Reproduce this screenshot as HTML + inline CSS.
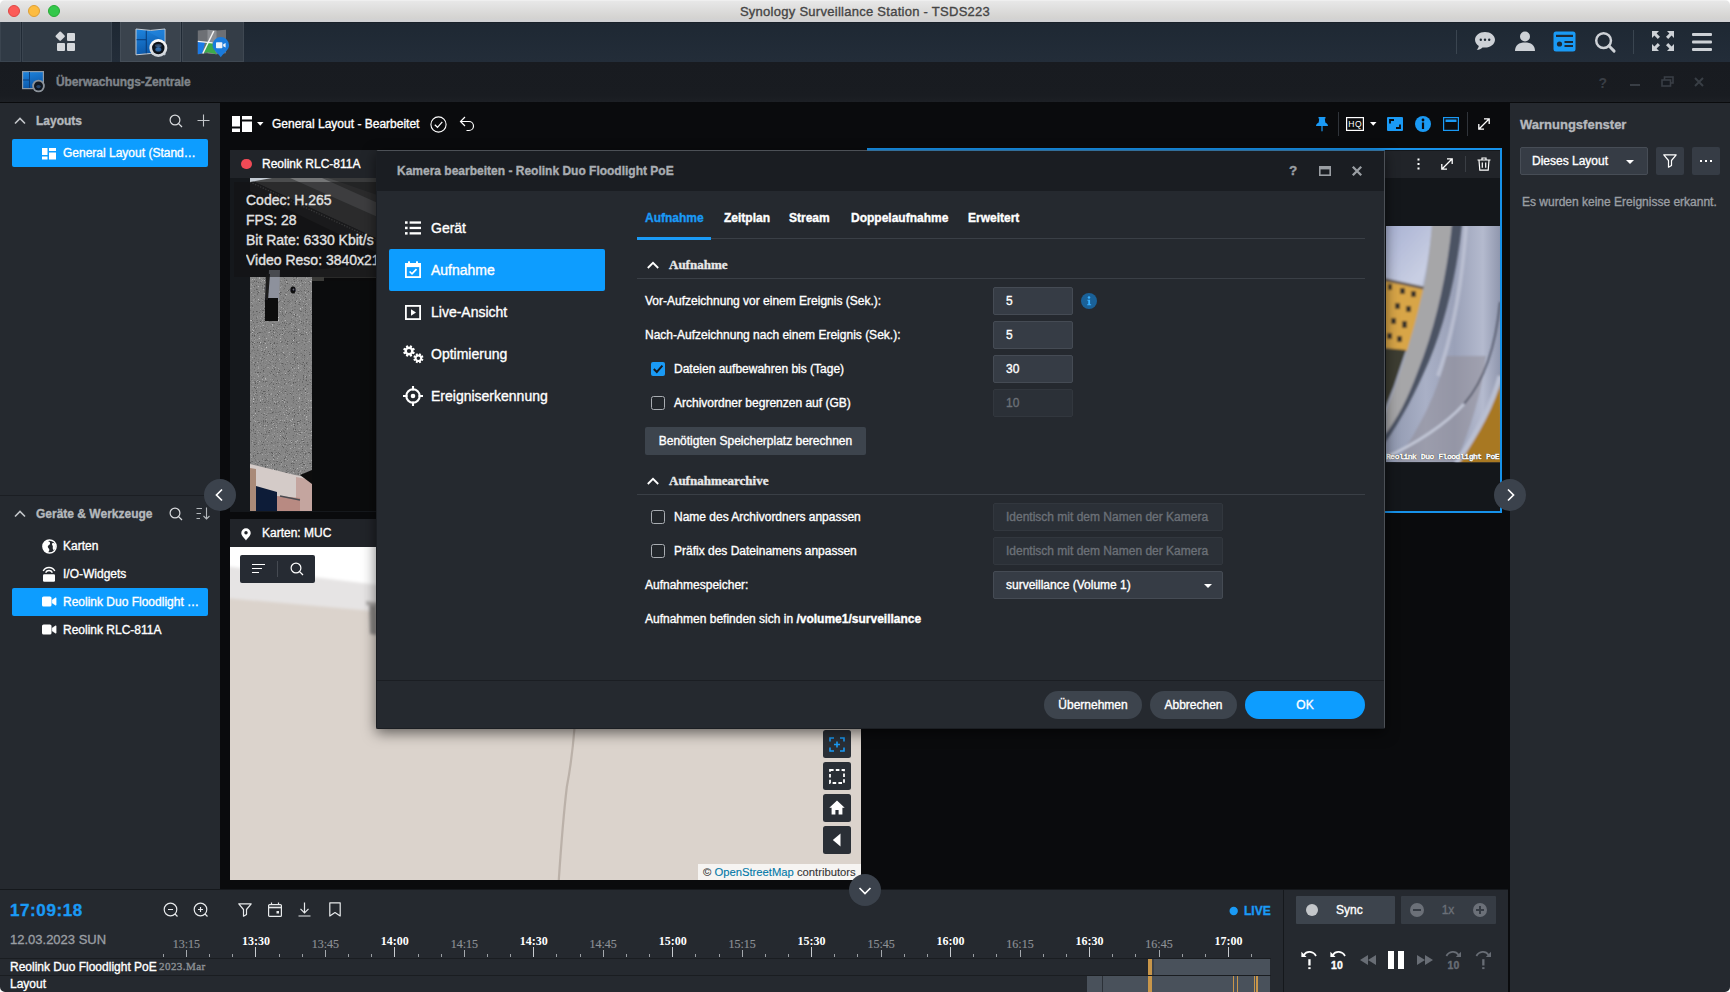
<!DOCTYPE html>
<html lang="de">
<head>
<meta charset="utf-8">
<title>Synology Surveillance Station - TSDS223</title>
<style>
*{box-sizing:border-box;margin:0;padding:0}
html,body{width:1730px;height:992px;overflow:hidden;background:#0a0b0d}
body{font-family:"Liberation Sans",sans-serif;font-size:13px;color:#fff;position:relative;-webkit-font-smoothing:antialiased;-webkit-text-stroke:0.350px}
.abs{position:absolute}
.t{position:absolute;white-space:nowrap;line-height:16px}
svg{position:absolute;overflow:visible}
.serif{font-family:"Liberation Serif",serif}
/* regions */
#titlebar{left:0;top:0;width:1730px;height:22px;background:linear-gradient(#f3f3f3 0,#e7e7e7 1.500px,#d4d3d1 18px,#cfd1d5 22px)}
#taskbar{left:0;top:22px;width:1730px;height:40px;background:linear-gradient(#1e2833,#232d39);border-top:1px solid #19212a}
#apphdr{left:0;top:62px;width:1730px;height:40px;background:linear-gradient(#181b20 0,#191c21 85%,#1d2025 100%)}
#left{left:0;top:103px;width:220px;height:786px;background:#25292f}
#main{left:220px;top:102px;width:1290px;height:787px;background:#0a0b0d}
#right{left:1510px;top:103px;width:220px;height:889px;background:#25292f}
#timeline{left:0;top:888.500px;width:1283px;height:104px;background:#25292f;border-top:1px solid #15181c}
#controls{left:1283px;top:888.500px;width:225px;height:104px;background:#25292f;border-top:1px solid #15181c;border-left:1px solid #15181c}
</style>
</head>
<body>
<div id="titlebar" class="abs"></div>
<div id="taskbar" class="abs"></div>
<div id="apphdr" class="abs"></div>
<div id="left" class="abs"></div>
<div id="main" class="abs"></div>
<div id="right" class="abs"></div>
<div id="timeline" class="abs"></div>
<div id="controls" class="abs"></div>
<div class="abs" style="left:8px;top:5px;width:12px;height:12px;border-radius:50%;background:#fc5b57;border:0.5px solid #df4744"></div>
<div class="abs" style="left:28px;top:5px;width:12px;height:12px;border-radius:50%;background:#fdbc40;border:0.5px solid #de9f34"></div>
<div class="abs" style="left:48px;top:5px;width:12px;height:12px;border-radius:50%;background:#34c84a;border:0.5px solid #27aa35"></div>
<div class="t" style="left:0;top:4px;width:1730px;text-align:center;font-size:13px;color:#454545;letter-spacing:0.270px">Synology Surveillance Station - TSDS223</div>

<div class="abs" style="left:0;top:22px;width:21px;height:40px;background:#303a45;border:1px solid #3a444f;border-top:none"></div>
<div class="abs" style="left:22px;top:22px;width:90px;height:40px;background:#303a45;border:1px solid #3a444f;border-top:none"></div>
<div class="abs" style="left:120px;top:22px;width:61px;height:40px;background:#3a434d;border:1px solid #454e58;border-top:none"></div>
<div class="abs" style="left:182px;top:22px;width:62px;height:40px;background:#343d47;border:1px solid #3f4852;border-top:none"></div>
<svg style="left:55px;top:31px" width="22" height="22" viewBox="0 0 22 22"><g fill="#d5d8dc"><rect x="1.6" y="1.6" width="7.2" height="7.2" rx="1" transform="rotate(45 5.2 5.2)"/><rect x="12" y="2" width="8" height="8" rx="1"/><rect x="2" y="12" width="8" height="8" rx="1"/><rect x="12" y="12" width="8" height="8" rx="1"/></g></svg>
<!-- surveillance icon -->
<svg style="left:134px;top:28px" width="36" height="30" viewBox="0 0 36 30"><defs><linearGradient id="gb" x1="0" y1="0" x2="0.300" y2="1"><stop offset="0" stop-color="#1f86e0"/><stop offset="1" stop-color="#0b57a8"/></linearGradient><radialGradient id="gl" cx="0.500" cy="0.500" r="0.500"><stop offset="0" stop-color="#2a5f98"/><stop offset="0.500" stop-color="#0e1a28"/><stop offset="1" stop-color="#0a0d12"/></radialGradient><linearGradient id="gr" x1="0" y1="0" x2="0" y2="1"><stop offset="0" stop-color="#ffffff"/><stop offset="1" stop-color="#c9ced4"/></linearGradient></defs><path d="M2 1 Q16.500 3.800 31 1 V26.800 Q16.500 24.200 2 26.800Z" fill="url(#gb)" stroke="#c3ccd6" stroke-width="1"/><path d="M12.300 2.800 V25.200" stroke="#0a3f7d" stroke-width="1.100"/><path d="M2.600 11.700 H12.300" stroke="#0a3f7d" stroke-width="1.100"/><path d="M12.800 3 L31 13 V2 Q20 3.800 12.800 3Z" fill="#2f93ea" opacity=".350"/><circle cx="24.300" cy="20" r="9" fill="url(#gr)"/><circle cx="24.300" cy="20" r="6.200" fill="url(#gl)"/><ellipse cx="24.300" cy="21.500" rx="3" ry="2" fill="#3a7fc8" opacity=".700"/><ellipse cx="24.300" cy="17.500" rx="3.400" ry="1.600" fill="#5a86b8" opacity=".450"/></svg>
<!-- map icon -->
<svg style="left:197px;top:29px" width="36" height="30" viewBox="0 0 36 30"><path d="M0.800 1.500 L10.500 0.800 L19.500 1.500 L29 0.800 V24.300 L19.500 25.300 L10.500 24.300 L0.800 25.300Z" fill="#6d7075"/><path d="M10.500 0.800 L19.500 1.500 V25.300 L10.500 24.300Z" fill="#8b8e93"/><path d="M0.800 12.500 L8 13.300 L5.500 24.300 L0.800 25.300Z" fill="#1b7ae6"/><path d="M9.500 13.500 L15.500 14.200 L19.500 25.300 L10.500 23.300 L6.800 24Z" fill="#3daa4b"/><path d="M16.800 2 L5.800 24.500" stroke="#f4f4f4" stroke-width="1.500"/><path d="M0.800 12.300 L15.500 13.800" stroke="#f4f4f4" stroke-width="1.300"/><path d="M23.800 8 a8.300 8.300 0 0 1 8.300 8.300 c0 4.500 -5 7.500 -8.300 11.900 c-3.300 -4.400 -8.300 -7.400 -8.300 -11.900 a8.300 8.300 0 0 1 8.300 -8.300z" fill="#1a7bdc"/><rect x="19" y="13.300" width="6.400" height="6" rx="0.800" fill="#eef3fa"/><path d="M26.200 15.300 L28.600 14 V18.600 L26.200 17.300Z" fill="#eef3fa"/></svg>
<!-- right icons -->
<div class="abs" style="left:1456px;top:30px;width:1px;height:24px;background:#3a4550"></div>
<div class="abs" style="left:1633px;top:30px;width:1px;height:24px;background:#3a4550"></div>
<svg style="left:1474px;top:30px" width="22" height="22" viewBox="0 0 22 22"><path d="M11 2 C5.500 2 1 5.400 1 9.800 c0 2.500 1.500 4.700 3.800 6.100 c-.2 1.500 -1 2.800 -2.100 3.800 c2.400 0 4.400 -.9 5.800 -2.300 c.8 .2 1.600 .2 2.500 .2 c5.500 0 10 -3.400 10 -7.800 S16.500 2 11 2z" fill="#cdd1d6"/><circle cx="6.800" cy="9.800" r="1.200" fill="#1d2833"/><circle cx="11" cy="9.800" r="1.200" fill="#1d2833"/><circle cx="15.200" cy="9.800" r="1.200" fill="#1d2833"/></svg>
<svg style="left:1514px;top:30px" width="22" height="22" viewBox="0 0 22 22"><circle cx="11" cy="6.500" r="5" fill="#cdd1d6"/><path d="M1 21 c0 -6 4 -8.500 10 -8.500 s10 2.500 10 8.500z" fill="#cdd1d6"/></svg>
<svg style="left:1553px;top:30.600px" width="24" height="22" viewBox="0 0 24 22"><rect x="0.500" y="0.500" width="22" height="20" rx="2.500" fill="#1a9af5"/><rect x="3" y="3.800" width="17" height="2.200" fill="#1d2833"/><circle cx="6.500" cy="13" r="2.600" fill="#1d2833"/><rect x="11.500" y="10" width="8.500" height="2" fill="#1d2833"/><rect x="11.500" y="14" width="8.500" height="2" fill="#1d2833"/></svg>
<svg style="left:1594px;top:30.500px" width="23" height="23" viewBox="0 0 24 24"><circle cx="10" cy="10" r="7.700" fill="none" stroke="#cdd1d6" stroke-width="2.600"/><path d="M15.500 15.500 L21 21" stroke="#cdd1d6" stroke-width="3" stroke-linecap="round"/></svg>
<svg style="left:1651px;top:30px" width="24" height="22" viewBox="0 0 24 22"><g fill="#cdd1d6"><path d="M1 1 h7 l-2.400 2.400 l3.400 3.400 l-2.200 2.200 l-3.400 -3.400 L1 8z"/><path d="M23 1 v7 l-2.400 -2.400 l-3.400 3.400 l-2.200 -2.200 l3.400 -3.400 L16 1z"/><path d="M1 21 v-7 l2.400 2.400 l3.400 -3.400 l2.200 2.200 l-3.400 3.400 L8 21z"/><path d="M23 21 h-7 l2.400 -2.400 l-3.400 -3.400 l2.200 -2.200 l3.400 3.400 L23 14z"/></g></svg>
<svg style="left:1692px;top:32.700px" width="20" height="18" viewBox="0 0 20 18"><g fill="#cdd1d6"><rect x="0" y="0" width="20" height="3" rx="1"/><rect x="0" y="7.500" width="20" height="3" rx="1"/><rect x="0" y="15" width="20" height="3" rx="1"/></g></svg>

<svg style="left:22px;top:71px" width="24" height="22" viewBox="0 0 24 22"><rect x="0.600" y="0.600" width="20.800" height="17" fill="url(#gb)" stroke="#8f9aa6" stroke-width="1.200"/><path d="M7.500 1 V17 M1 9 H7.500" stroke="#0c3f7a" stroke-width="1"/><circle cx="16.500" cy="15" r="6.300" fill="#8c939b"/><circle cx="16.500" cy="15" r="4.500" fill="#10161e"/><ellipse cx="16.500" cy="15.600" rx="2.200" ry="1.700" fill="#2a4f7a" opacity=".8"/></svg>
<div class="t" style="left:56px;top:74px;font-size:12px;font-weight:bold;color:#7f848a;letter-spacing:-0.1px">Überwachungs-Zentrale</div>
<div class="t" style="left:1598.500px;top:75px;font-size:14px;font-weight:bold;color:#393e45;-webkit-text-stroke:0">?</div>
<div class="abs" style="left:1630px;top:84px;width:10px;height:2px;background:#393e45"></div>
<svg style="left:1661px;top:76px" width="13" height="11" viewBox="0 0 13 11"><rect x="3.500" y="1" width="8.500" height="6" fill="none" stroke="#393e45" stroke-width="1.600"/><rect x="1" y="4" width="8.500" height="6" fill="#171b21" stroke="#393e45" stroke-width="1.600"/></svg>
<svg style="left:1694px;top:77px" width="10" height="10" viewBox="0 0 10 10"><path d="M1 1 L9 9 M9 1 L1 9" stroke="#393e45" stroke-width="2"/></svg>

<svg style="left:14px;top:117px" width="12" height="8" viewBox="0 0 12 8"><path d="M1 6.500 L6 1.500 L11 6.500" fill="none" stroke="#c3c6ca" stroke-width="1.600"/></svg><div class="t" style="left:36px;top:113px;font-size:12px;font-weight:bold;color:#b4b8bc">Layouts</div>
<svg style="left:169px;top:114px" width="14" height="14" viewBox="0 0 14 14"><circle cx="6" cy="6" r="4.900" fill="none" stroke="#d9dbde" stroke-width="1.200"/><path d="M9.600 9.600 L13 13" stroke="#d9dbde" stroke-width="1.300"/></svg><svg style="left:197px;top:114px" width="13" height="13" viewBox="0 0 13 13"><path d="M6.500 0.500 V12.500 M0.500 6.500 H12.500" stroke="#c3c6ca" stroke-width="1.100"/></svg>
<div class="abs" style="left:12px;top:139px;width:196px;height:28px;background:#0d9dff;border-radius:2px"></div>
<svg style="left:42px;top:147.500px" width="14" height="12" viewBox="0 0 14 12"><g fill="#fff"><rect x="0" y="0" width="5.500" height="7"/><rect x="0" y="8.500" width="5.500" height="3"/><rect x="7" y="0" width="7" height="3"/><rect x="7" y="4.500" width="7" height="7"/></g></svg>
<div class="t" style="left:63px;top:145px;font-size:12px;color:#fff">General Layout (Stand…</div>
<div class="abs" style="left:0;top:495px;width:220px;height:1px;background:#1b1e23"></div>
<svg style="left:14px;top:510px" width="12" height="8" viewBox="0 0 12 8"><path d="M1 6.500 L6 1.500 L11 6.500" fill="none" stroke="#c3c6ca" stroke-width="1.600"/></svg><div class="t" style="left:36px;top:506px;font-size:12px;font-weight:bold;color:#b4b8bc">Geräte &amp; Werkzeuge</div>
<svg style="left:169px;top:507px" width="14" height="14" viewBox="0 0 14 14"><circle cx="6" cy="6" r="4.900" fill="none" stroke="#d9dbde" stroke-width="1.200"/><path d="M9.600 9.600 L13 13" stroke="#d9dbde" stroke-width="1.300"/></svg><svg style="left:196px;top:507px" width="15" height="13" viewBox="0 0 15 13"><path d="M0.500 1.500 H6 M0.500 6.500 H5 M0.500 11.500 H4 M10.500 0.500 V12 M7.500 9 L10.500 12 L13.500 9" fill="none" stroke="#b4b8bc" stroke-width="1.100"/></svg>
<svg style="left:42px;top:538.500px" width="15" height="15" viewBox="0 0 15 15"><circle cx="7.500" cy="7.500" r="6.600" fill="#25292f" stroke="#fff" stroke-width="1.500"/><path d="M5 1.800 c2 .8 3.500 1 3 3 c-.4 1.500 -2.500 1.500 -2.200 3.200 c.3 1.500 1.700 1.200 1.500 3 c-.2 1.400 -1 2 -1.600 2.800 c-3 -.8 -4.800 -3.400 -4.800 -6.300 c0 -2.500 1.700 -4.800 4.100 -5.700z M11 4 c1 0 2 .6 2.600 1.800 c.4 2.400 -.4 4.300 -1.800 5.600 c-.6 -1 -1.400 -2 -1 -3.200 c.4 -1.200 -.6 -1.700 -.8 -2.600 c-.2 -1 .3 -1.600 1 -1.600z" fill="#fff"/></svg>
<div class="t" style="left:63px;top:538px;font-size:12px">Karten</div>
<svg style="left:42px;top:565.500px" width="14" height="16" viewBox="0 0 14 16"><path d="M1.200 5 a6.500 6.500 0 0 1 11.600 0 M3.600 6.600 a3.800 3.800 0 0 1 6.800 0" fill="none" stroke="#fff" stroke-width="1.400"/><rect x="1" y="8.200" width="12" height="7.500" rx="1.200" fill="#fff"/></svg>
<div class="t" style="left:63px;top:566px;font-size:12px">I/O-Widgets</div>
<div class="abs" style="left:12px;top:588px;width:196px;height:28px;background:#0d9dff;border-radius:2px"></div>
<svg style="left:42px;top:596px" width="15" height="11" viewBox="0 0 15 11"><rect x="0" y="0.500" width="9.500" height="10" rx="1.600" fill="#fff"/><path d="M10.300 4 L14 1.800 V9.200 L10.300 7Z" fill="#fff" stroke="#fff" stroke-width="0.800" stroke-linejoin="round"/></svg><div class="t" style="left:63px;top:594px;font-size:12px">Reolink Duo Floodlight …</div>
<svg style="left:42px;top:624px" width="15" height="11" viewBox="0 0 15 11"><rect x="0" y="0.500" width="9.500" height="10" rx="1.600" fill="#fff"/><path d="M10.300 4 L14 1.800 V9.200 L10.300 7Z" fill="#fff" stroke="#fff" stroke-width="0.800" stroke-linejoin="round"/></svg><div class="t" style="left:63px;top:622px;font-size:12px">Reolink RLC-811A</div>

<svg style="left:232px;top:116px" width="20" height="16" viewBox="0 0 20 16"><g fill="#fff"><rect x="0" y="0" width="8" height="10.500"/><rect x="0" y="12.500" width="8" height="3.500"/><rect x="10" y="0" width="10" height="3.500"/><rect x="10" y="5.500" width="10" height="10.500"/></g></svg>
<svg style="left:257px;top:122px" width="6.500" height="3.700" viewBox="0 0 7 4"><path d="M0 0 H7 L3.500 4Z" fill="#fff"/></svg>
<div class="t" style="left:272px;top:116px;font-size:12px;color:#fff">General Layout - Bearbeitet</div>
<svg style="left:430px;top:116px" width="17" height="17" viewBox="0 0 17 17"><circle cx="8.500" cy="8.500" r="7.600" fill="none" stroke="#fff" stroke-width="1.100"/><path d="M4.800 8.800 L7.500 11.300 L12.300 5.800" fill="none" stroke="#fff" stroke-width="1.200"/></svg>
<svg style="left:459px;top:116px" width="16" height="16" viewBox="0 0 16 16"><path d="M6 1 L1.500 5.500 L6 10 M1.800 5.500 H10 a4.500 4.500 0 0 1 0 9 H7.500" fill="none" stroke="#fff" stroke-width="1.200"/></svg>
<svg style="left:1315px;top:116px" width="14" height="16" viewBox="0 0 14 16"><path d="M3.500 1 H10.500 V2.500 H9.800 L10.300 6.500 C12 7.300 13 8.500 13 10 H7.600 V14.800 L7 15.800 L6.400 14.800 V10 H1 C1 8.500 2 7.300 3.700 6.500 L4.200 2.500 H3.500Z" fill="#1a9af5"/></svg>
<div class="abs" style="left:1338px;top:112px;width:1px;height:24px;background:#30343a"></div>
<svg style="left:1346px;top:117px" width="18" height="14" viewBox="0 0 18 14"><rect x="0.600" y="0.600" width="16.800" height="12.800" fill="none" stroke="#fff" stroke-width="1.200"/></svg>
<div class="t" style="left:1346px;top:118.500px;width:18px;text-align:center;font-size:8.500px;line-height:11px;color:#fff;letter-spacing:0.600px;padding-left:0.500px;-webkit-text-stroke:0">HQ</div>
<svg style="left:1370px;top:122px" width="6.500" height="3.700" viewBox="0 0 7 4"><path d="M0 0 H7 L3.500 4Z" fill="#fff"/></svg>
<svg style="left:1387px;top:117px" width="16" height="14" viewBox="0 0 16 14"><rect x="0" y="0" width="16" height="14" rx="1" fill="#1a9af5"/><path d="M3 6.500 V3 H7 M13 7.500 V11 H9" fill="none" stroke="#0a0b0d" stroke-width="1.800"/></svg>
<svg style="left:1415px;top:116px" width="16" height="16" viewBox="0 0 16 16"><circle cx="8" cy="8" r="8" fill="#1a9af5"/><circle cx="8" cy="4" r="1.400" fill="#0a0b0d"/><rect x="6.900" y="6.500" width="2.200" height="6.500" fill="#0a0b0d"/></svg>
<svg style="left:1443px;top:117px" width="16" height="14" viewBox="0 0 16 14"><rect x="0.600" y="0.600" width="14.800" height="12.800" fill="none" stroke="#1a9af5" stroke-width="1.200"/><rect x="2.500" y="2.500" width="11" height="2.500" fill="#1a9af5"/></svg>
<div class="abs" style="left:1467px;top:112px;width:1px;height:24px;background:#30343a"></div>
<svg style="left:1478px;top:118px" width="12" height="12" viewBox="0 0 12 12"><path d="M1 11 L11 1 M6 0.800 H11.200 V6 M0.800 6 V11.200 H6" fill="none" stroke="#fff" stroke-width="1.300"/></svg>
<div class="abs" style="left:230px;top:150px;width:160px;height:362px;background:#15181c"></div>
<div class="abs" style="left:230px;top:150px;width:160px;height:28px;background:#212429"></div>
<div class="abs" style="left:241px;top:158.500px;width:10.500px;height:10.500px;border-radius:50%;background:#ef4a56"></div>
<div class="t" style="left:262px;top:156px;font-size:12px">Reolink RLC-811A</div>
<svg style="left:250px;top:178px" width="130" height="333" viewBox="0 0 130 333"><defs><filter id="nz" x="0" y="0" width="100%" height="100%"><feTurbulence type="fractalNoise" baseFrequency="0.850" numOctaves="2" seed="7" result="n"/><feColorMatrix in="n" type="matrix" values="0 0 0 0 0.720  0 0 0 0 0.720  0 0 0 0 0.720  1.600 1.600 1.600 0 -2.700" result="a"/><feComposite in="a" in2="SourceGraphic" operator="in"/></filter><filter id="nz2" x="0" y="0" width="100%" height="100%"><feTurbulence type="fractalNoise" baseFrequency="0.900" numOctaves="1" seed="3" result="n"/><feColorMatrix in="n" type="matrix" values="0 0 0 0 0.100  0 0 0 0 0.100  0 0 0 0 0.100  -3 -3 -3 0 4.150" result="a"/><feComposite in="a" in2="SourceGraphic" operator="in"/></filter><filter id="bl1"><feGaussianBlur stdDeviation="0.700"/></filter></defs>
<rect width="130" height="333" fill="#0b0b0c"/>
<rect x="0" y="0" width="130" height="100" fill="#161617"/>
<path d="M0 0 H130 V62 L0 2Z" fill="#4b4c4d"/>
<path d="M40 0 H72 L130 26 V40Z" fill="#747576"/>
<path d="M78 0 H130 V18Z" fill="#3a3b3c"/>
<path d="M0 2 L130 62 V76 L0 13Z" fill="#262627"/>
<path d="M0 4 L130 64" stroke="#6a6b6c" stroke-width="1.200" stroke-dasharray="1.200 1.600"/>
<path d="M0 0 H22 L0 4Z" fill="#c3cad2"/>
<path d="M60 92 L130 86 V100 H60Z" fill="#2a2a29"/>
<rect x="0" y="99" width="62" height="234" fill="#868686"/>
<rect x="0" y="99" width="62" height="234" fill="#fff" filter="url(#nz)"/>
<rect x="0" y="99" width="62" height="234" fill="#000" filter="url(#nz2)"/>
<path d="M62 99 H74 V103 H62Z" fill="#3b3b38"/>
<g filter="url(#bl1)"><path d="M19 92 h11 l-1 30 h-11z" fill="#8d919c"/><path d="M15 120 h13 v23 h-13z" fill="#07070a"/><path d="M16 96 h4 l-2 26 h-3z" fill="#1a1a1e"/><ellipse cx="43" cy="112" rx="2.600" ry="3.400" fill="#0b0b10"/><circle cx="43.500" cy="111.500" r="0.900" fill="#6a6a70"/></g>
<g filter="url(#bl1)"><path d="M0 286 L45 297 L62 300 V333 H0Z" fill="#d4cbc8"/><path d="M46 299 L62 302 V333 H46Z" fill="#c4a59f"/><path d="M6 308 L27 314 V333 H6Z" fill="#0f1c38"/><path d="M27 318 L50 320 V333 H27Z" fill="#b88a82"/><path d="M50 297 L62 292 V306 Z" fill="#0d0d0e"/><path d="M0 290 L6 291 V333 H0Z" fill="#a98a78"/><path d="M30 318 L50 322" stroke="#4b4b50" stroke-width="1.500"/></g>
<rect x="62" y="103" width="68" height="230" fill="#0b0c0d"/>
</svg>
<div class="abs" style="left:234px;top:182px;width:150px;height:95px;background:rgba(18,18,20,0.560)"></div>
<div class="t" style="left:246px;top:191px;font-size:14px;line-height:18px;color:#e2e2e2;width:136px;overflow:hidden">Codec: H.265</div>
<div class="t" style="left:246px;top:211px;font-size:14px;line-height:18px;color:#e2e2e2;width:136px;overflow:hidden">FPS: 28</div>
<div class="t" style="left:246px;top:231px;font-size:14px;line-height:18px;color:#e2e2e2;width:136px;overflow:hidden">Bit Rate: 6330 Kbit/s</div>
<div class="t" style="left:246px;top:251px;font-size:14px;line-height:18px;color:#e2e2e2;width:136px;overflow:hidden">Video Reso: 3840x2160</div>
<div class="abs" style="left:866.500px;top:148px;width:635.500px;height:365px;background:#14171b;border:2.500px solid #1792ea"></div>
<div class="abs" style="left:869px;top:150.500px;width:630.500px;height:27.500px;background:#212429"></div>
<svg style="left:1417px;top:158px" width="3" height="12" viewBox="0 0 3 12"><g fill="#fff"><rect x="0.500" y="0.500" width="2" height="2"/><rect x="0.500" y="5" width="2" height="2"/><rect x="0.500" y="9.500" width="2" height="2"/></g></svg>
<svg style="left:1441px;top:158px" width="12" height="12" viewBox="0 0 12 12"><path d="M1 11 L11 1 M6 0.800 H11.200 V6 M0.800 6 V11.200 H6" fill="none" stroke="#fff" stroke-width="1.300"/></svg>
<div class="abs" style="left:1465px;top:156px;width:1px;height:16px;background:#3a3e44"></div>
<svg style="left:1477px;top:157px" width="14" height="14" viewBox="0 0 14 14"><path d="M0.500 3 H13.500 M5 2.800 V1 H9 V2.800 M2 3.200 L2.800 13.200 H11.200 L12 3.200 M5.300 5.500 V10.800 M8.700 5.500 V10.800" fill="none" stroke="#fff" stroke-width="1.200"/></svg>
<svg style="left:1385.500px;top:226.300px" width="114" height="236.300" viewBox="0 0 114 236.300"><defs><linearGradient id="sky" x1="0" y1="0" x2="0.300" y2="1"><stop offset="0" stop-color="#a7b0d2"/><stop offset="0.450" stop-color="#c9cfe3"/><stop offset="0.800" stop-color="#aeb6d0"/><stop offset="1" stop-color="#c4c9da"/></linearGradient><linearGradient id="pipe" x1="0" y1="0" x2="1" y2="0"><stop offset="0" stop-color="#8e96ad"/><stop offset="0.350" stop-color="#a9b0c6"/><stop offset="0.600" stop-color="#9aa1b8"/><stop offset="0.850" stop-color="#b4bace"/><stop offset="1" stop-color="#9097ae"/></linearGradient><filter id="bl2"><feGaussianBlur stdDeviation="0.800"/></filter><clipPath id="c2"><rect width="114" height="236.300"/></clipPath></defs>
<g clip-path="url(#c2)"><rect width="114" height="236.300" fill="url(#pipe)"/>
<g filter="url(#bl2)">
<path d="M60 130 C52 165 35 200 10 236 H70 C85 200 95 170 100 130Z" fill="#908c98" opacity=".550"/>
<path d="M-2 -2 H48 L46 0 C42 50 22 130 -2 190Z" fill="url(#sky)"/>
<path d="M-2 53 L40 63 L26 126 L-2 122Z" fill="#d8a546"/><path d="M-2 52 L40 61 L39.500 64 L-2 55Z" fill="#6b5f55"/>
<g fill="#3b342c"><rect x="2" y="58" width="4" height="6"/><rect x="14" y="62" width="5" height="6"/><rect x="25" y="65" width="5" height="6"/><rect x="9" y="77" width="5" height="6"/><rect x="20" y="80" width="5" height="6"/><rect x="5" y="92" width="5" height="6"/><rect x="16" y="95" width="5" height="7"/><rect x="1" y="107" width="5" height="6"/><rect x="11" y="110" width="5" height="6"/></g>
<path d="M-2 122 L20 124 L8 160 L-2 185Z" fill="#3c3d30"/>
<path d="M46 -2 H66 C62 40 52 95 32 145 C22 172 12 192 0 212 V185 C14 150 30 100 40 50 C43 30 45 12 46 -2Z" fill="#a6a6a8"/>
<path d="M66 -2 H76 C71 45 60 95 43 135 C30 165 15 195 -2 218 L-2 210 C12 192 22 172 32 145 C52 95 62 40 66 -2Z" fill="#4c5264"/>
<path d="M114 76 C110 120 98 155 78 178" fill="none" stroke="#4a4f60" stroke-width="1.600"/>
<path d="M78 178 C60 198 30 218 -2 232" fill="none" stroke="#c6cbda" stroke-width="2.500"/>
<path d="M114 148 C108 175 96 200 72 238 H116Z" fill="#a87820"/>
<path d="M114 150 C106 180 92 205 70 238" fill="none" stroke="#b9bfd2" stroke-width="5"/>
<path d="M80 0 C76 60 66 110 52 150" fill="none" stroke="#c3c8d8" stroke-width="4" opacity=".700"/>
</g></g>
</svg>
<div class="t" style="left:1386px;top:451px;font-size:8px;line-height:12px;color:#fff;font-family:'Liberation Mono',monospace;letter-spacing:-0.450px;width:114px;overflow:hidden;font-weight:bold;text-shadow:0 0 1px #000,0 0 1px #000">Reolink Duo Floodlight PoE</div>
<div class="abs" style="left:230px;top:519px;width:631px;height:361px;background:#dbd3cc"></div>
<svg style="left:230px;top:547px" width="160" height="100" viewBox="0 0 160 100"><defs><filter id="bl3" x="-10%" y="-10%" width="120%" height="120%"><feGaussianBlur stdDeviation="1.600"/></filter><clipPath id="c3"><rect width="160" height="100"/></clipPath></defs><g clip-path="url(#c3)"><g filter="url(#bl3)"><path d="M-5 -5 H165 V66 L-5 51Z" fill="#e6e4e4"/><path d="M-5 -5 H165 V40 L-5 19Z" fill="#ffffff"/><path d="M139 56 L147 57 V88 L140 87Z" fill="#8d8a88"/><path d="M136 54 L150 56 V60 L136 58Z" fill="#a9a6a4"/></g></g></svg>
<div class="abs" style="left:230px;top:519px;width:631px;height:28px;background:#212429"></div>
<svg style="left:241px;top:527.500px" width="10" height="12.700" viewBox="0 0 11 14"><path d="M5.500 0.300 a5.200 5.200 0 0 1 5.200 5.200 c0 3.200 -3.500 5.500 -5.200 8.300 c-1.700 -2.800 -5.200 -5.100 -5.200 -8.300 a5.200 5.200 0 0 1 5.200 -5.200z" fill="#fff"/><circle cx="5.500" cy="5.300" r="1.900" fill="#212429"/></svg>
<div class="t" style="left:262px;top:525px;font-size:12px">Karten: MUC</div>
<div class="abs" style="left:240px;top:555px;width:75px;height:28px;background:#262b33;border-radius:2px"></div>
<svg style="left:252px;top:563px" width="13" height="11" viewBox="0 0 13 11"><path d="M0 1.500 H13 M0 5.500 H10 M0 9.500 H7" stroke="#fff" stroke-width="1.200"/></svg>
<div class="abs" style="left:277px;top:561px;width:1px;height:16px;background:#454a52"></div>
<svg style="left:290px;top:562px" width="14" height="14" viewBox="0 0 14 14"><circle cx="6" cy="6" r="4.900" fill="none" stroke="#fff" stroke-width="1.200"/><path d="M9.600 9.600 L13 13" stroke="#fff" stroke-width="1.300"/></svg>
<svg style="left:555px;top:725px" width="24" height="156" viewBox="0 0 24 156"><path d="M19.500 3 C17.500 28 14.500 48 11.800 62 C8.500 90 5.800 125 3.800 155" fill="none" stroke="#9c8f86" stroke-width="2.200" opacity=".500"/></svg>
<div class="abs" style="left:823px;top:730px;width:28px;height:28px;background:#2a2f36;border-radius:2.500px"></div>
<div class="abs" style="left:823px;top:762px;width:28px;height:28px;background:#2a2f36;border-radius:2.500px"></div>
<div class="abs" style="left:823px;top:794px;width:28px;height:28px;background:#2a2f36;border-radius:2.500px"></div>
<div class="abs" style="left:823px;top:826px;width:28px;height:28px;background:#2a2f36;border-radius:2.500px"></div>
<svg style="left:829px;top:736.500px" width="16" height="15" viewBox="0 0 16 15"><path d="M1 4.500 V1 H5 M11 1 H15 V4.500 M15 10.500 V14 H11 M5 14 H1 V10.500 M8 4.500 V10.500 M5 7.500 H11" fill="none" stroke="#1a9af5" stroke-width="1.600"/></svg>
<svg style="left:829px;top:768.500px" width="16" height="15" viewBox="0 0 16 15"><rect x="1" y="1" width="14" height="13" fill="none" stroke="#fff" stroke-width="1.800" stroke-dasharray="3.600 2.200"/></svg>
<svg style="left:829px;top:800px" width="16" height="15" viewBox="0 0 16 15"><path d="M8 0.500 L0.300 7.800 H2.600 V14.500 H6.400 V10 H9.600 V14.500 H13.400 V7.800 H15.700Z" fill="#fff"/></svg>
<svg style="left:832px;top:833px" width="9" height="14" viewBox="0 0 9 14"><path d="M8.500 0.500 V13.500 L0.800 7Z" fill="#fff"/></svg>
<div class="abs" style="left:698px;top:864px;width:163px;height:16px;background:rgba(255,255,255,0.75)"></div>
<div class="t" style="left:703px;top:864px;font-size:11.250px;line-height:16px;color:#333;-webkit-text-stroke:0.100px">© <span style="color:#0078a8">OpenStreetMap</span> contributors</div>
<svg style="left:204px;top:479px" width="32" height="32" viewBox="0 0 32 32"><circle cx="16" cy="16" r="16" fill="#3b424c"/><path d="M18 10.500 L12.500 16 L18 21.500" fill="none" stroke="#fff" stroke-width="1.700"/></svg>
<svg style="left:1494px;top:479px" width="32" height="32" viewBox="0 0 32 32"><circle cx="16" cy="16" r="16" fill="#3b424c"/><path d="M14 10.500 L19.500 16 L14 21.500" fill="none" stroke="#fff" stroke-width="1.700"/></svg>
<svg style="left:849px;top:874px" width="32" height="32" viewBox="0 0 32 32"><circle cx="16" cy="16" r="16" fill="#3b424c"/><path d="M10.500 14 L16 19.500 L21.500 14" fill="none" stroke="#fff" stroke-width="1.700"/></svg>

<div class="t" style="left:1520px;top:116.500px;font-size:13px;font-weight:bold;color:#b5b8bd">Warnungsfenster</div>
<div class="abs" style="left:1520px;top:147px;width:128px;height:28px;background:#363c45;border:1px solid #474d56;border-radius:2px"></div>
<div class="t" style="left:1532px;top:153px;font-size:12px">Dieses Layout</div>
<svg style="left:1626px;top:160px" width="8" height="4" viewBox="0 0 8 4"><path d="M0 0 H8 L4 4Z" fill="#fff"/></svg>
<div class="abs" style="left:1656px;top:147px;width:28px;height:28px;background:#363c45;border-radius:2px"></div>
<svg style="left:1663px;top:154px" width="14" height="14" viewBox="0 0 14 14"><path d="M0.800 0.800 H13.200 L8.500 6.500 V11.500 L5.500 13.200 V6.500Z" fill="none" stroke="#fff" stroke-width="1.200" stroke-linejoin="round"/></svg>
<div class="abs" style="left:1692px;top:147px;width:28px;height:28px;background:#363c45;border-radius:2px"></div>
<svg style="left:1700px;top:160px" width="12" height="2" viewBox="0 0 12 2"><g fill="#fff"><rect x="0" y="0" width="2" height="2"/><rect x="5" y="0" width="2" height="2"/><rect x="10" y="0" width="2" height="2"/></g></svg>
<div class="t" style="left:1522px;top:194px;font-size:12px;color:#9a9ea3">Es wurden keine Ereignisse erkannt.</div>

<div class="t" style="left:10px;top:901px;font-size:17px;line-height:20px;font-weight:bold;color:#1a9af5;letter-spacing:0.600px">17:09:18</div>
<div class="t" style="left:10px;top:932px;font-size:13px;color:#9a9ea3">12.03.2023 SUN</div>
<svg style="left:163px;top:902px" width="16" height="16" viewBox="0 0 16 16"><circle cx="7.500" cy="7.500" r="6.300" fill="none" stroke="#e8eaec" stroke-width="1.200"/><path d="M5 7.500 H10 M12 12 L14.500 14.500" stroke="#e8eaec" stroke-width="1.200"/></svg>
<svg style="left:193px;top:902px" width="16" height="16" viewBox="0 0 16 16"><circle cx="7.500" cy="7.500" r="6.300" fill="none" stroke="#e8eaec" stroke-width="1.200"/><path d="M5 7.500 H10 M7.500 5 V10 M12 12 L14.500 14.500" stroke="#e8eaec" stroke-width="1.200"/></svg>
<svg style="left:238px;top:903px" width="14" height="14" viewBox="0 0 14 14"><path d="M0.800 0.800 H13.200 L8.500 6.500 V11.500 L5.500 13.200 V6.500Z" fill="none" stroke="#e8eaec" stroke-width="1.200" stroke-linejoin="round"/></svg>
<svg style="left:268px;top:902px" width="14" height="15" viewBox="0 0 14 15"><rect x="0.600" y="2.600" width="12.800" height="11.800" rx="1" fill="none" stroke="#e8eaec" stroke-width="1.200"/><path d="M0.600 5.500 H13.400" stroke="#e8eaec" stroke-width="1.600"/><path d="M3.500 0.500 V3 M10.500 0.500 V3" stroke="#e8eaec" stroke-width="1.200"/><rect x="8.500" y="9" width="2.500" height="2.500" fill="#e8eaec"/></svg>
<svg style="left:298px;top:902px" width="13" height="15" viewBox="0 0 13 15"><path d="M6.500 0.500 V10.500 M2.500 6.800 L6.500 10.800 L10.500 6.800 M0.500 14 H12.500" fill="none" stroke="#e8eaec" stroke-width="1.200"/></svg>
<svg style="left:329px;top:902px" width="12" height="15" viewBox="0 0 12 15"><path d="M0.800 0.800 H11.200 V14 L6 10.500 L0.800 14Z" fill="none" stroke="#e8eaec" stroke-width="1.200" stroke-linejoin="round"/></svg>
<svg style="left:1229px;top:906px" width="10" height="10" viewBox="0 0 10 10"><circle cx="4.700" cy="5" r="4.200" fill="#1a9af5"/></svg>
<div class="t" style="left:1244px;top:903px;font-size:12px;font-weight:bold;color:#1a9af5">LIVE</div>
<div class="t serif" style="left:156.4px;top:936px;width:60px;text-align:center;font-size:12px;color:#8d9196;-webkit-text-stroke:0.150px">13:15</div>
<div class="abs" style="left:185.9px;top:950px;width:1px;height:7px;background:#a5a9ae"></div>
<div class="t serif" style="left:225.9px;top:933px;width:60px;text-align:center;font-size:12px;font-weight:bold;color:#fff;-webkit-text-stroke:0">13:30</div>
<div class="abs" style="left:255.4px;top:947px;width:1px;height:10px;background:#c9ccd0"></div>
<div class="t serif" style="left:295.3px;top:936px;width:60px;text-align:center;font-size:12px;color:#8d9196;-webkit-text-stroke:0.150px">13:45</div>
<div class="abs" style="left:324.8px;top:950px;width:1px;height:7px;background:#a5a9ae"></div>
<div class="t serif" style="left:364.8px;top:933px;width:60px;text-align:center;font-size:12px;font-weight:bold;color:#fff;-webkit-text-stroke:0">14:00</div>
<div class="abs" style="left:394.3px;top:947px;width:1px;height:10px;background:#c9ccd0"></div>
<div class="t serif" style="left:434.3px;top:936px;width:60px;text-align:center;font-size:12px;color:#8d9196;-webkit-text-stroke:0.150px">14:15</div>
<div class="abs" style="left:463.8px;top:950px;width:1px;height:7px;background:#a5a9ae"></div>
<div class="t serif" style="left:503.8px;top:933px;width:60px;text-align:center;font-size:12px;font-weight:bold;color:#fff;-webkit-text-stroke:0">14:30</div>
<div class="abs" style="left:533.2px;top:947px;width:1px;height:10px;background:#c9ccd0"></div>
<div class="t serif" style="left:573.2px;top:936px;width:60px;text-align:center;font-size:12px;color:#8d9196;-webkit-text-stroke:0.150px">14:45</div>
<div class="abs" style="left:602.7px;top:950px;width:1px;height:7px;background:#a5a9ae"></div>
<div class="t serif" style="left:642.7px;top:933px;width:60px;text-align:center;font-size:12px;font-weight:bold;color:#fff;-webkit-text-stroke:0">15:00</div>
<div class="abs" style="left:672.2px;top:947px;width:1px;height:10px;background:#c9ccd0"></div>
<div class="t serif" style="left:712.2px;top:936px;width:60px;text-align:center;font-size:12px;color:#8d9196;-webkit-text-stroke:0.150px">15:15</div>
<div class="abs" style="left:741.7px;top:950px;width:1px;height:7px;background:#a5a9ae"></div>
<div class="t serif" style="left:781.6px;top:933px;width:60px;text-align:center;font-size:12px;font-weight:bold;color:#fff;-webkit-text-stroke:0">15:30</div>
<div class="abs" style="left:811.1px;top:947px;width:1px;height:10px;background:#c9ccd0"></div>
<div class="t serif" style="left:851.1px;top:936px;width:60px;text-align:center;font-size:12px;color:#8d9196;-webkit-text-stroke:0.150px">15:45</div>
<div class="abs" style="left:880.6px;top:950px;width:1px;height:7px;background:#a5a9ae"></div>
<div class="t serif" style="left:920.6px;top:933px;width:60px;text-align:center;font-size:12px;font-weight:bold;color:#fff;-webkit-text-stroke:0">16:00</div>
<div class="abs" style="left:950.1px;top:947px;width:1px;height:10px;background:#c9ccd0"></div>
<div class="t serif" style="left:990.0px;top:936px;width:60px;text-align:center;font-size:12px;color:#8d9196;-webkit-text-stroke:0.150px">16:15</div>
<div class="abs" style="left:1019.5px;top:950px;width:1px;height:7px;background:#a5a9ae"></div>
<div class="t serif" style="left:1059.5px;top:933px;width:60px;text-align:center;font-size:12px;font-weight:bold;color:#fff;-webkit-text-stroke:0">16:30</div>
<div class="abs" style="left:1089.0px;top:947px;width:1px;height:10px;background:#c9ccd0"></div>
<div class="t serif" style="left:1129.0px;top:936px;width:60px;text-align:center;font-size:12px;color:#8d9196;-webkit-text-stroke:0.150px">16:45</div>
<div class="abs" style="left:1158.5px;top:950px;width:1px;height:7px;background:#a5a9ae"></div>
<div class="t serif" style="left:1198.5px;top:933px;width:60px;text-align:center;font-size:12px;font-weight:bold;color:#fff;-webkit-text-stroke:0">17:00</div>
<div class="abs" style="left:1228.0px;top:947px;width:1px;height:10px;background:#c9ccd0"></div>
<div class="abs" style="left:162.7px;top:954px;width:1px;height:3px;background:#9a9ea3"></div>
<div class="abs" style="left:209.1px;top:954px;width:1px;height:3px;background:#9a9ea3"></div>
<div class="abs" style="left:232.2px;top:954px;width:1px;height:3px;background:#9a9ea3"></div>
<div class="abs" style="left:278.5px;top:954px;width:1px;height:3px;background:#9a9ea3"></div>
<div class="abs" style="left:301.7px;top:954px;width:1px;height:3px;background:#9a9ea3"></div>
<div class="abs" style="left:348.0px;top:954px;width:1px;height:3px;background:#9a9ea3"></div>
<div class="abs" style="left:371.2px;top:954px;width:1px;height:3px;background:#9a9ea3"></div>
<div class="abs" style="left:417.5px;top:954px;width:1px;height:3px;background:#9a9ea3"></div>
<div class="abs" style="left:440.6px;top:954px;width:1px;height:3px;background:#9a9ea3"></div>
<div class="abs" style="left:486.9px;top:954px;width:1px;height:3px;background:#9a9ea3"></div>
<div class="abs" style="left:510.1px;top:954px;width:1px;height:3px;background:#9a9ea3"></div>
<div class="abs" style="left:556.4px;top:954px;width:1px;height:3px;background:#9a9ea3"></div>
<div class="abs" style="left:579.6px;top:954px;width:1px;height:3px;background:#9a9ea3"></div>
<div class="abs" style="left:625.9px;top:954px;width:1px;height:3px;background:#9a9ea3"></div>
<div class="abs" style="left:649.0px;top:954px;width:1px;height:3px;background:#9a9ea3"></div>
<div class="abs" style="left:695.3px;top:954px;width:1px;height:3px;background:#9a9ea3"></div>
<div class="abs" style="left:718.5px;top:954px;width:1px;height:3px;background:#9a9ea3"></div>
<div class="abs" style="left:764.8px;top:954px;width:1px;height:3px;background:#9a9ea3"></div>
<div class="abs" style="left:788.0px;top:954px;width:1px;height:3px;background:#9a9ea3"></div>
<div class="abs" style="left:834.3px;top:954px;width:1px;height:3px;background:#9a9ea3"></div>
<div class="abs" style="left:857.4px;top:954px;width:1px;height:3px;background:#9a9ea3"></div>
<div class="abs" style="left:903.8px;top:954px;width:1px;height:3px;background:#9a9ea3"></div>
<div class="abs" style="left:926.9px;top:954px;width:1px;height:3px;background:#9a9ea3"></div>
<div class="abs" style="left:973.2px;top:954px;width:1px;height:3px;background:#9a9ea3"></div>
<div class="abs" style="left:996.4px;top:954px;width:1px;height:3px;background:#9a9ea3"></div>
<div class="abs" style="left:1042.7px;top:954px;width:1px;height:3px;background:#9a9ea3"></div>
<div class="abs" style="left:1065.9px;top:954px;width:1px;height:3px;background:#9a9ea3"></div>
<div class="abs" style="left:1112.2px;top:954px;width:1px;height:3px;background:#9a9ea3"></div>
<div class="abs" style="left:1135.3px;top:954px;width:1px;height:3px;background:#9a9ea3"></div>
<div class="abs" style="left:1181.6px;top:954px;width:1px;height:3px;background:#9a9ea3"></div>
<div class="abs" style="left:1204.8px;top:954px;width:1px;height:3px;background:#9a9ea3"></div>
<div class="abs" style="left:1251.1px;top:954px;width:1px;height:3px;background:#9a9ea3"></div>
<div class="abs" style="left:0;top:958px;width:1271px;height:1px;background:#1a1d21"></div>
<div class="abs" style="left:0;top:975px;width:1271px;height:1px;background:#1a1d21"></div>
<div class="t" style="left:10px;top:959px;font-size:12px">Reolink Duo Floodlight PoE</div>
<div class="t serif" style="left:159px;top:958px;font-size:11px;letter-spacing:0.450px;color:#8d9196">2023.Mar</div>
<div class="t" style="left:10px;top:976px;font-size:12px">Layout</div>
<div class="abs" style="left:1152px;top:959px;width:118px;height:16px;background:#49515b"></div>
<div class="abs" style="left:1148px;top:959px;width:4px;height:16px;background:#c8964a"></div>
<div class="abs" style="left:1152px;top:959px;width:2px;height:16px;background:#3a4048"></div>
<div class="abs" style="left:1087px;top:976px;width:183px;height:16px;background:#49515b"></div>
<div class="abs" style="left:1102px;top:976px;width:1px;height:16px;background:#2c3138"></div>
<div class="abs" style="left:1148px;top:976px;width:4px;height:16px;background:#c8964a"></div>
<div class="abs" style="left:1232.700px;top:976px;width:1px;height:16px;background:#c8964a"></div>
<div class="abs" style="left:1237px;top:976px;width:1px;height:16px;background:#c8964a"></div>
<div class="abs" style="left:1254.200px;top:976px;width:1px;height:16px;background:#c8964a"></div>
<div class="abs" style="left:1256px;top:976px;width:2px;height:16px;background:#c8964a"></div>

<div class="abs" style="left:1296px;top:896px;width:99px;height:28px;background:#3d444d;border-radius:1px"></div>
<div class="abs" style="left:1306px;top:904px;width:12px;height:12px;border-radius:50%;background:#c4c7ca"></div>
<div class="t" style="left:1336px;top:902px;font-size:12px">Sync</div>
<div class="abs" style="left:1401px;top:896px;width:95px;height:28px;background:#363c44;border-radius:1px"></div>
<svg style="left:1410px;top:903px" width="14" height="14" viewBox="0 0 14 14"><circle cx="7" cy="7" r="7" fill="#6b7078"/><rect x="3" y="6" width="8" height="2" fill="#363c44"/></svg>
<div class="t" style="left:1428px;top:902px;width:40px;text-align:center;font-size:12px;color:#6b7078">1x</div>
<svg style="left:1473px;top:903px" width="14" height="14" viewBox="0 0 14 14"><circle cx="7" cy="7" r="7" fill="#6b7078"/><rect x="3" y="6" width="8" height="2" fill="#363c44"/><rect x="6" y="3" width="2" height="8" fill="#363c44"/></svg>
<svg style="left:1300.5px;top:951px" width="16" height="19" viewBox="0 0 16 19"><path d="M0.400 0.800 V6 H5.600Z" fill="#fff"/><path d="M2.800 3.900 C4.500 1.400 7 0.700 9 0.900 C11.600 1.200 13.800 2.600 15 5" fill="none" stroke="#fff" stroke-width="1.700"/><rect x="7.300" y="8.200" width="2.300" height="6.300" fill="#fff"/><rect x="7.300" y="16.200" width="2.300" height="1.900" fill="#fff"/></svg>
<svg style="left:1329.8px;top:951px" width="16" height="19" viewBox="0 0 16 19"><path d="M0.400 0.800 V6 H5.600Z" fill="#fff"/><path d="M2.800 3.900 C4.500 1.400 7 0.700 9 0.900 C11.600 1.200 13.800 2.600 15 5" fill="none" stroke="#fff" stroke-width="1.700"/></svg>
<svg style="left:1446.2px;top:951px" width="16" height="19" viewBox="0 0 16 19"><path d="M15 0.800 V6 H9.800Z" fill="#686d75"/><path d="M12.600 3.900 C10.900 1.400 8.400 0.700 6.400 0.900 C3.800 1.200 1.600 2.600 0.400 5" fill="none" stroke="#686d75" stroke-width="1.700"/></svg>
<svg style="left:1475.5px;top:951px" width="16" height="19" viewBox="0 0 16 19"><path d="M15 0.800 V6 H9.800Z" fill="#686d75"/><path d="M12.600 3.900 C10.900 1.400 8.400 0.700 6.400 0.900 C3.800 1.200 1.600 2.600 0.400 5" fill="none" stroke="#686d75" stroke-width="1.700"/><rect x="6.200" y="8.200" width="2.300" height="6.300" fill="#686d75"/><rect x="6.200" y="16.200" width="2.300" height="1.900" fill="#686d75"/></svg>
<div class="t" style="left:1330.500px;top:959.500px;width:13px;text-align:center;font-size:10.500px;line-height:11px;font-weight:bold;color:#fff;letter-spacing:0.200px">10</div>
<div class="t" style="left:1447px;top:959.500px;width:13px;text-align:center;font-size:10.500px;line-height:11px;font-weight:bold;color:#686d75;letter-spacing:0.200px">10</div>
<svg style="left:1359.500px;top:955px" width="16" height="10" viewBox="0 0 16 10"><path d="M8 0 V10 L0 5Z M16 0 V10 L8 5Z" fill="#686d75"/></svg>
<div class="abs" style="left:1388px;top:951px;width:6px;height:18px;background:#fff"></div>
<div class="abs" style="left:1398px;top:951px;width:6px;height:18px;background:#fff"></div>
<svg style="left:1417px;top:955px" width="16" height="10" viewBox="0 0 16 10"><path d="M0 0 V10 L8 5Z M8 0 V10 L16 5Z" fill="#686d75"/></svg>

<div class="abs" style="left:376px;top:150px;width:1009px;height:579px;background:#25292f;border:1px solid #1b1e23;border-top-color:#4c5056;border-right-color:#4c5056;box-shadow:0 4px 14px rgba(0,0,0,0.550);border-radius:2px"></div>
<div class="abs" style="left:377px;top:151px;width:1007px;height:40px;background:#1a1d22"></div>
<div class="abs" style="left:867px;top:150px;width:518px;height:1px;background:rgba(23,146,234,0.450)"></div>
<div class="abs" style="left:377px;top:680px;width:1007px;height:1px;background:#1b1e23"></div>
<div class="t" style="left:397px;top:163px;font-size:12px;font-weight:bold;color:#a9adb2">Kamera bearbeiten - Reolink Duo Floodlight PoE</div>
<div class="t" style="left:1289px;top:163px;font-size:13.500px;font-weight:bold;color:#9a9ea3">?</div>
<svg style="left:1319px;top:166px" width="12" height="10" viewBox="0 0 12 10"><rect x="0.800" y="0.800" width="10.400" height="8.400" fill="none" stroke="#9a9ea3" stroke-width="1.600"/><rect x="0.800" y="0.800" width="10.400" height="2.600" fill="#9a9ea3"/></svg>
<svg style="left:1352px;top:166px" width="10" height="10" viewBox="0 0 10 10"><path d="M0.800 0.800 L9.200 9.200 M9.200 0.800 L0.800 9.200" stroke="#9a9ea3" stroke-width="2.300"/></svg>
<div class="abs" style="left:389px;top:249px;width:216px;height:42px;background:#0d9dff;border-radius:2px"></div>
<div class="t" style="left:431px;top:219px;font-size:14px;line-height:18px">Gerät</div>
<div class="t" style="left:431px;top:261px;font-size:14px;line-height:18px">Aufnahme</div>
<div class="t" style="left:431px;top:303px;font-size:14px;line-height:18px">Live-Ansicht</div>
<div class="t" style="left:431px;top:345px;font-size:14px;line-height:18px">Optimierung</div>
<div class="t" style="left:431px;top:387px;font-size:14px;line-height:18px">Ereigniserkennung</div>
<svg style="left:405px;top:221px" width="16" height="14" viewBox="0 0 16 14"><g fill="#fff"><rect x="0" y="0.300" width="2.600" height="2.500"/><rect x="0" y="5.700" width="2.600" height="2.500"/><rect x="0" y="11.100" width="2.600" height="2.500"/><rect x="4.600" y="0.400" width="11.400" height="2.300"/><rect x="4.600" y="5.800" width="11.400" height="2.300"/><rect x="4.600" y="11.200" width="11.400" height="2.300"/></g></svg>
<svg style="left:405px;top:261px" width="16" height="17" viewBox="0 0 16 17"><rect x="0.900" y="2.900" width="14.200" height="13.200" fill="none" stroke="#fff" stroke-width="1.800"/><rect x="0.900" y="2.900" width="14.200" height="3.200" fill="#fff"/><rect x="3" y="0.300" width="2" height="3.500" fill="#fff"/><rect x="11" y="0.300" width="2" height="3.500" fill="#fff"/><path d="M4.600 10.500 L7 12.800 L11.500 8.200" fill="none" stroke="#fff" stroke-width="1.700"/></svg>
<svg style="left:405px;top:304.500px" width="16" height="15" viewBox="0 0 16 15"><rect x="0.900" y="0.900" width="14.200" height="13.200" fill="none" stroke="#fff" stroke-width="1.800"/><path d="M6 4.300 L11 7.500 L6 10.700Z" fill="#fff"/></svg>
<svg style="left:402.500px;top:344.500px" width="21" height="19" viewBox="0 0 21 19"><path d="M10.37 6.54 L11.87 7.18 L10.98 9.31 L9.47 8.71 L8.71 9.47 L9.31 10.98 L7.18 11.87 L6.54 10.37 L5.46 10.37 L4.82 11.87 L2.69 10.98 L3.29 9.47 L2.53 8.71 L1.02 9.31 L0.13 7.18 L1.63 6.54 L1.63 5.46 L0.13 4.82 L1.02 2.69 L2.53 3.29 L3.29 2.53 L2.69 1.02 L4.82 0.13 L5.46 1.63 L6.54 1.63 L7.18 0.13 L9.31 1.02 L8.71 2.53 L9.47 3.29 L10.98 2.69 L11.87 4.82 L10.37 5.46Z M8.10 6.00 a2.1 2.1 0 1 0 -4.20 0 a2.1 2.1 0 1 0 4.20 0Z" fill="#fff" fill-rule="evenodd"/><path d="M19.17 13.67 L20.47 14.22 L19.70 16.06 L18.40 15.54 L17.74 16.20 L18.26 17.50 L16.42 18.27 L15.87 16.97 L14.93 16.97 L14.38 18.27 L12.54 17.50 L13.06 16.20 L12.40 15.54 L11.10 16.06 L10.33 14.22 L11.63 13.67 L11.63 12.73 L10.33 12.18 L11.10 10.34 L12.40 10.86 L13.06 10.20 L12.54 8.90 L14.38 8.13 L14.93 9.43 L15.87 9.43 L16.42 8.13 L18.26 8.90 L17.74 10.20 L18.40 10.86 L19.70 10.34 L20.47 12.18 L19.17 12.73Z M17.20 13.20 a1.8 1.8 0 1 0 -3.60 0 a1.8 1.8 0 1 0 3.60 0Z" fill="#fff" fill-rule="evenodd"/></svg>
<svg style="left:403px;top:386px" width="20" height="20" viewBox="0 0 20 20"><circle cx="10" cy="10" r="6.700" fill="none" stroke="#fff" stroke-width="2.100"/><circle cx="10" cy="10" r="2.300" fill="#fff"/><path d="M10 0 V4.500 M10 15.500 V20 M0 10 H4.500 M15.500 10 H20" stroke="#fff" stroke-width="2.100"/></svg>
<div class="t" style="left:645px;top:210px;font-size:12px;font-weight:bold;color:#1a9af5">Aufnahme</div>
<div class="t" style="left:724px;top:210px;font-size:12px;font-weight:bold;color:#fff">Zeitplan</div>
<div class="t" style="left:789px;top:210px;font-size:12px;font-weight:bold;color:#fff">Stream</div>
<div class="t" style="left:851px;top:210px;font-size:12px;font-weight:bold;color:#fff">Doppelaufnahme</div>
<div class="t" style="left:968px;top:210px;font-size:12px;font-weight:bold;color:#fff">Erweitert</div>
<div class="abs" style="left:637px;top:238px;width:728px;height:1px;background:#3a3f46"></div>
<div class="abs" style="left:637px;top:237px;width:74px;height:2.500px;background:#1a9af5"></div>
<svg style="left:647px;top:261px" width="12" height="8" viewBox="0 0 12 8"><path d="M0.800 7 L6 1.800 L11.200 7" fill="none" stroke="#fff" stroke-width="1.800"/></svg>
<div class="t serif" style="left:669px;top:257px;font-size:13px;font-weight:bold;color:#e8e8e8">Aufnahme</div>
<div class="abs" style="left:637px;top:278px;width:728px;height:1px;background:#3a3f46"></div>
<svg style="left:647px;top:477px" width="12" height="8" viewBox="0 0 12 8"><path d="M0.800 7 L6 1.800 L11.200 7" fill="none" stroke="#fff" stroke-width="1.800"/></svg>
<div class="t serif" style="left:669px;top:473px;font-size:13px;font-weight:bold;color:#e8e8e8">Aufnahmearchive</div>
<div class="abs" style="left:637px;top:494px;width:728px;height:1px;background:#3a3f46"></div>
<div class="t" style="left:645px;top:293px;font-size:12px;">Vor-Aufzeichnung vor einem Ereignis (Sek.):</div>
<div class="abs" style="left:993px;top:287px;width:80px;height:28px;background:#363c45;border:1px solid #454b54;border-radius:2px"></div><div class="t" style="left:1006px;top:293px;font-size:12px;color:#fff">5</div>
<svg style="left:1081px;top:293.300px" width="16" height="16" viewBox="0 0 15 15"><circle cx="7.500" cy="7.500" r="7.500" fill="#1a6198"/><circle cx="7.500" cy="4.200" r="1.200" fill="#39b0ff"/><path d="M6 6.300 H8.500 V10.500 H9.500 V11.500 H5.800 V10.500 H6.800 V7.300 H6Z" fill="#39b0ff"/></svg>
<div class="t" style="left:645px;top:327px;font-size:12px;">Nach-Aufzeichnung nach einem Ereignis (Sek.):</div>
<div class="abs" style="left:993px;top:321px;width:80px;height:28px;background:#363c45;border:1px solid #454b54;border-radius:2px"></div><div class="t" style="left:1006px;top:327px;font-size:12px;color:#fff">5</div>
<svg style="left:651px;top:362px" width="14" height="14" viewBox="0 0 14 14"><rect width="14" height="14" rx="2" fill="#1a9af5"/><path d="M2.800 7 L5.800 10 L11.400 3.600" fill="none" stroke="#14181d" stroke-width="1.900"/></svg>
<div class="t" style="left:674px;top:361px;font-size:12px;">Dateien aufbewahren bis (Tage)</div>
<div class="abs" style="left:993px;top:355px;width:80px;height:28px;background:#363c45;border:1px solid #454b54;border-radius:2px"></div><div class="t" style="left:1006px;top:361px;font-size:12px;color:#fff">30</div>
<div class="abs" style="left:651px;top:396px;width:14px;height:14px;border:1px solid #a9adb2;border-radius:2.500px;background:#22262b"></div>
<div class="t" style="left:674px;top:395px;font-size:12px;">Archivordner begrenzen auf (GB)</div>
<div class="abs" style="left:993px;top:389px;width:80px;height:28px;background:#2b3037;border:1px solid #32373e;border-radius:2px"></div><div class="t" style="left:1006px;top:395px;font-size:12px;color:#6b7077">10</div>
<div class="abs" style="left:645px;top:427px;width:221px;height:28px;background:#3d444d;border-radius:2px"></div>
<div class="t" style="left:645px;top:433px;font-size:12px;width:221px;text-align:center">Benötigten Speicherplatz berechnen</div>
<div class="abs" style="left:651px;top:510px;width:14px;height:14px;border:1px solid #a9adb2;border-radius:2.500px;background:#22262b"></div>
<div class="t" style="left:674px;top:509px;font-size:12px;">Name des Archivordners anpassen</div>
<div class="abs" style="left:993px;top:503px;width:230px;height:28px;background:#2b3037;border:1px solid #32373e;border-radius:2px"></div><div class="t" style="left:1006px;top:509px;font-size:12px;color:#6b7077">Identisch mit dem Namen der Kamera</div>
<div class="abs" style="left:651px;top:544px;width:14px;height:14px;border:1px solid #a9adb2;border-radius:2.500px;background:#22262b"></div>
<div class="t" style="left:674px;top:543px;font-size:12px;">Präfix des Dateinamens anpassen</div>
<div class="abs" style="left:993px;top:537px;width:230px;height:28px;background:#2b3037;border:1px solid #32373e;border-radius:2px"></div><div class="t" style="left:1006px;top:543px;font-size:12px;color:#6b7077">Identisch mit dem Namen der Kamera</div>
<div class="t" style="left:645px;top:577px;font-size:12px;">Aufnahmespeicher:</div>
<div class="abs" style="left:993px;top:571px;width:230px;height:28px;background:#363c45;border:1px solid #454b54;border-radius:2px"></div><div class="t" style="left:1006px;top:577px;font-size:12px;color:#fff">surveillance (Volume 1)</div>
<svg style="left:1204px;top:584px" width="8" height="4" viewBox="0 0 8 4"><path d="M0 0 H8 L4 4Z" fill="#fff"/></svg>
<div class="t" style="left:645px;top:611px;font-size:12px;">Aufnahmen befinden sich in <b>/volume1/surveillance</b></div>
<div class="abs" style="left:1044px;top:691px;width:98px;height:28px;background:#3d444d;border-radius:14px"></div>
<div class="t" style="left:1044px;top:697px;font-size:12px;width:98px;text-align:center">Übernehmen</div>
<div class="abs" style="left:1150px;top:691px;width:87px;height:28px;background:#3d444d;border-radius:14px"></div>
<div class="t" style="left:1150px;top:697px;font-size:12px;width:87px;text-align:center">Abbrechen</div>
<div class="abs" style="left:1245px;top:691px;width:120px;height:28px;background:#0d9dff;border-radius:14px"></div>
<div class="t" style="left:1245px;top:697px;font-size:12px;width:120px;text-align:center">OK</div>

<svg style="left:0;top:0" width="5" height="5" viewBox="0 0 5 5"><path d="M0 0 H5 A5 5 0 0 0 0 5Z" fill="#fff"/></svg>
<svg style="left:1725px;top:0" width="5" height="5" viewBox="0 0 5 5"><path d="M5 0 H0 A5 5 0 0 1 5 5Z" fill="#fff"/></svg>
<svg style="left:0;top:987px" width="5" height="5" viewBox="0 0 5 5"><path d="M0 5 H5 A5 5 0 0 1 0 0Z" fill="#fff"/></svg>
<svg style="left:1725px;top:987px" width="5" height="5" viewBox="0 0 5 5"><path d="M5 5 H0 A5 5 0 0 0 5 0Z" fill="#fff"/></svg>
</body>
</html>
